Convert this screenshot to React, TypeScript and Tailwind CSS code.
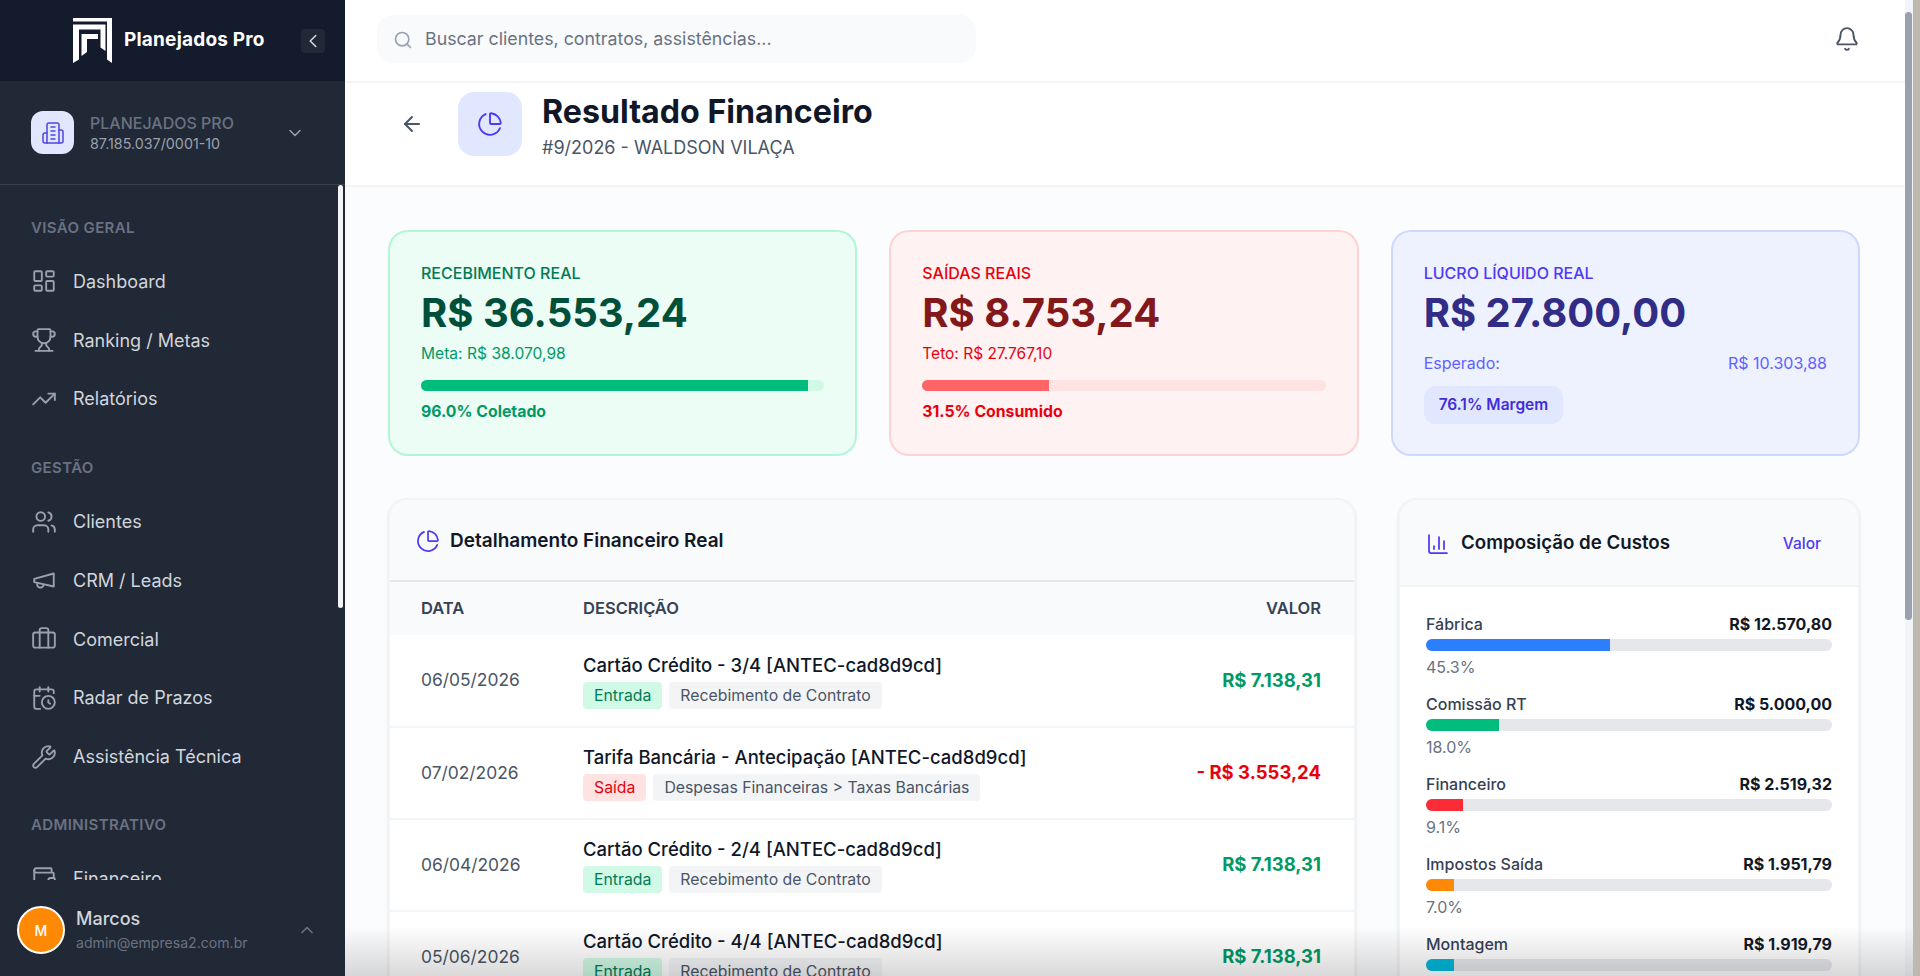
import {
  ArrowLeft, Bell, Briefcase, CalendarClock, ChartColumn, ChevronDown, ChevronLeft, ChevronUp,
  LayoutDashboard, PieChart, Search, TrendingUp, Trophy, Users, Wallet, Wrench,
} from "lucide-react";
import type { ComponentType, ReactNode } from "react";

type IconProps = { className?: string; strokeWidth?: number };
type Item = { label: string; icon: ComponentType<IconProps> };

function MegaphoneIcon({ className, strokeWidth }: IconProps) {
  return (
    <svg className={className} viewBox="0 0 24 24" fill="none" stroke="currentColor" strokeWidth={strokeWidth} strokeLinecap="round" strokeLinejoin="round">
      <path d="m3 11 18-5v12L3 14v-3z" />
      <path d="M11.6 16.8a3 3 0 1 1-5.8-1.6" />
    </svg>
  );
}

const sections: { title: string; cls: string; items: Item[] }[] = [
  {
    title: "VISÃO GERAL",
    cls: "mt-[34px]",
    items: [
      { label: "Dashboard", icon: LayoutDashboard },
      { label: "Ranking / Metas", icon: Trophy },
      { label: "Relatórios", icon: TrendingUp },
    ],
  },
  {
    title: "GESTÃO",
    cls: "mt-[31px]",
    items: [
      { label: "Clientes", icon: Users },
      { label: "CRM / Leads", icon: MegaphoneIcon },
      { label: "Comercial", icon: Briefcase },
      { label: "Radar de Prazos", icon: CalendarClock },
      { label: "Assistência Técnica", icon: Wrench },
    ],
  },
  {
    title: "ADMINISTRATIVO",
    cls: "mt-[30px]",
    items: [{ label: "Financeiro", icon: Wallet }],
  },
];

const rows = [
  { date: "06/05/2026", title: "Cartão Crédito - 3/4 [ANTEC-cad8d9cd]", kind: "Entrada", cat: "Recebimento de Contrato", value: "R$ 7.138,31" },
  { date: "07/02/2026", title: "Tarifa Bancária - Antecipação [ANTEC-cad8d9cd]", kind: "Saída", cat: "Despesas Financeiras > Taxas Bancárias", value: "- R$ 3.553,24" },
  { date: "06/04/2026", title: "Cartão Crédito - 2/4 [ANTEC-cad8d9cd]", kind: "Entrada", cat: "Recebimento de Contrato", value: "R$ 7.138,31" },
  { date: "05/06/2026", title: "Cartão Crédito - 4/4 [ANTEC-cad8d9cd]", kind: "Entrada", cat: "Recebimento de Contrato", value: "R$ 7.138,31" },
];

const costs = [
  { name: "Fábrica", value: "R$ 12.570,80", pct: 45.3, bar: "bg-blue-500" },
  { name: "Comissão RT", value: "R$ 5.000,00", pct: 18.0, bar: "bg-emerald-500" },
  { name: "Financeiro", value: "R$ 2.519,32", pct: 9.1, bar: "bg-red-500" },
  { name: "Impostos Saída", value: "R$ 1.951,79", pct: 7.0, bar: "bg-orange-400" },
  { name: "Montagem", value: "R$ 1.919,79", pct: 7.0, bar: "bg-cyan-500" },
];

function Logo() {
  return (
    <svg width="39" height="45" viewBox="0 0 39 45" fill="#fff" className="shrink-0">
      <path d="M0 0H39V45L34 41.5V3.5H0Z" />
      <path d="M0 6.5H32.5V33L27.5 29.5V11.5H6V41.5L0 45Z" />
      <path d="M8.5 16H25V21H14V34L8.5 38Z" />
    </svg>
  );
}

function BuildingIcon() {
  return (
    <svg width="24" height="24" viewBox="0 0 24 24" fill="none" stroke="#4f46e5" strokeWidth="1.5" strokeLinecap="round" strokeLinejoin="round">
      <path d="M6 22V4a2 2 0 0 1 2-2h8a2 2 0 0 1 2 2v18Z" />
      <path d="M6 12H4a2 2 0 0 0-2 2v6a2 2 0 0 0 2 2h2" />
      <path d="M18 9h2a2 2 0 0 1 2 2v9a2 2 0 0 1-2 2h-2" />
      <path d="M10 6h4" />
      <path d="M10 10h4" />
      <path d="M10 14h4" />
      <path d="M10 18h4" />
    </svg>
  );
}

function Sidebar() {
  return (
    <aside className="relative flex h-full w-[345px] shrink-0 flex-col bg-[#212936]">
      <div className="flex h-[81px] shrink-0 items-center bg-[#131b2c] pl-[73px] pr-[20px]">
        <Logo />
        <span className="ml-[12px] text-[19px] font-bold tracking-[0.2px] text-white">Planejados Pro</span>
        <span className="ml-auto flex h-[24px] w-[24px] items-center justify-center rounded-sm bg-[#212936] text-gray-300">
          <ChevronLeft className="h-[22px] w-[22px]" strokeWidth={1.75} />
        </span>
      </div>
      <div className="flex h-[104px] shrink-0 items-center border-b border-[#374151] pl-[31px] pr-[40px]">
        <span className="flex h-[43px] w-[43px] items-center justify-center rounded-xl bg-indigo-100">
          <BuildingIcon />
        </span>
        <div className="ml-[16px] min-w-0">
          <div className="text-[16px] leading-[22px] font-medium text-gray-500">PLANEJADOS PRO</div>
          <div className="text-[14.3px] leading-[20px] text-gray-400">87.185.037/0001-10</div>
        </div>
        <ChevronDown className="ml-auto h-[20px] w-[20px] text-gray-400" strokeWidth={1.75} />
      </div>
      <nav className="relative min-h-0 flex-1 overflow-hidden">
        {sections.map((s) => (
          <div key={s.title} className={s.cls}>
            <div className="mb-[15px] pl-[31px] text-[15px] leading-[18px] font-semibold tracking-wide text-gray-500">{s.title}</div>
            {s.items.map((it) => {
              const Icon = it.icon;
              return (
                <div key={it.label} className="flex h-[58.75px] items-center pl-[31px] text-gray-300">
                  <Icon className="h-[26px] w-[26px] shrink-0 text-gray-400" strokeWidth={1.75} />
                  <span className="ml-[16px] text-[18px]">{it.label}</span>
                </div>
              );
            })}
          </div>
        ))}
        <div className="absolute right-[2px] top-0 h-[423px] w-[5px] rounded-full bg-gray-100" />
      </nav>
      <div className="flex h-[96px] shrink-0 items-center pl-[17px] pr-[28px] pt-[4px]">
        <span className="flex h-[48px] w-[48px] items-center justify-center rounded-full border-2 border-white bg-orange-400 text-[14px] font-medium text-white">M</span>
        <div className="ml-[11px]">
          <div className="text-[18px] leading-[26px] font-medium text-gray-300">Marcos</div>
          <div className="text-[14.1px] leading-[22px] text-gray-500">admin@empresa2.com.br</div>
        </div>
        <ChevronUp className="ml-auto h-[20px] w-[20px] text-gray-500" />
      </div>
    </aside>
  );
}

function Card({ border, bg, children }: { border: string; bg: string; children: ReactNode }) {
  return (
    <div className={`h-[226px] rounded-[20px] border-2 p-[31px] ${border} ${bg}`}>{children}</div>
  );
}

function Bar({ track, fill, pct }: { track: string; fill: string; pct: number }) {
  return (
    <div className={`mt-[15px] h-[11px] overflow-hidden rounded-full ${track}`}>
      <div className={`h-full ${fill}`} style={{ width: `${pct}%` }} />
    </div>
  );
}

function Kpis() {
  const label = "text-[16px] leading-[20px] font-medium";
  const value = "mt-[6px] text-[40px] leading-[48px] font-bold";
  return (
    <div className="grid grid-cols-3 gap-[32px]">
      <Card border="border-emerald-200/80" bg="bg-emerald-50">
        <div className={`${label} text-emerald-700`}>RECEBIMENTO REAL</div>
        <div className={`${value} text-emerald-900`}>R$ 36.553,24</div>
        <div className="mt-[6px] text-[15.6px] leading-[22px] text-emerald-600">Meta: R$ 38.070,98</div>
        <Bar track="bg-emerald-100" fill="bg-emerald-500" pct={96} />
        <div className="mt-[11px] text-[15.8px] leading-[20px] font-bold text-emerald-600">96.0% Coletado</div>
      </Card>
      <Card border="border-red-200/80" bg="bg-red-50">
        <div className={`${label} text-red-600`}>SAÍDAS REAIS</div>
        <div className={`${value} text-red-900`}>R$ 8.753,24</div>
        <div className="mt-[6px] text-[15.5px] leading-[22px] text-red-600">Teto: R$ 27.767,10</div>
        <Bar track="bg-red-100" fill="bg-red-400" pct={31.5} />
        <div className="mt-[11px] text-[15.8px] leading-[20px] font-bold text-red-600">31.5% Consumido</div>
      </Card>
      <Card border="border-indigo-200/80" bg="bg-indigo-50">
        <div className={`${label} text-indigo-600`}>LUCRO LÍQUIDO REAL</div>
        <div className={`${value} text-indigo-900`}>R$ 27.800,00</div>
        <div className="mt-[15px] flex justify-between text-[16px] leading-[22px] text-indigo-500">
          <span>Esperado:</span>
          <span>R$ 10.303,88</span>
        </div>
        <div className="mt-[12px] inline-block rounded-[12px] bg-indigo-100 px-[15px] py-[8px] text-[15.5px] leading-[22px] font-semibold text-indigo-700">76.1% Margem</div>
      </Card>
    </div>
  );
}

function DetailTable() {
  return (
    <div className="w-[968px] shrink-0 overflow-hidden rounded-t-[20px] border-2 border-gray-100 bg-white shadow-sm">
      <div className="flex h-[82px] items-center gap-[10px] border-b-2 border-gray-200 bg-gray-50 pl-[26px] pt-[2px]">
        <PieChart className="h-[24px] w-[24px] text-indigo-600" strokeWidth={1.75} />
        <span className="text-[19px] font-semibold text-gray-900">Detalhamento Financeiro Real</span>
      </div>
      <table className="w-full border-collapse">
        <thead>
          <tr className="h-[53px] bg-gray-50 text-[16.5px] text-gray-700">
            <th className="w-[193px] pl-[31px] text-left font-semibold">DATA</th>
            <th className="text-left font-semibold">DESCRIÇÃO</th>
            <th className="pr-[33px] text-right font-semibold">VALOR</th>
          </tr>
        </thead>
        <tbody>
          {rows.map((r) => {
            const out = r.kind === "Saída";
            return (
              <tr key={r.title} className="h-[92px] border-b-2 border-gray-100">
                <td className="pl-[31px] text-[17.4px] text-gray-600">{r.date}</td>
                <td>
                  <div className="text-[18.5px] leading-[24px] font-medium text-gray-900">{r.title}</div>
                  <div className="mt-[5px] flex gap-[7px] text-[15.8px] leading-[27px]">
                    <span className={`rounded-[4px] px-[11px] ${out ? "bg-red-100 text-red-600" : "bg-emerald-100 text-emerald-700"}`}>{r.kind}</span>
                    <span className="rounded-[4px] bg-gray-100 px-[11px] text-gray-600">{r.cat}</span>
                  </div>
                </td>
                <td className={`pr-[33px] text-right text-[18.5px] font-bold ${out ? "text-red-600" : "text-emerald-600"}`}>{r.value}</td>
              </tr>
            );
          })}
        </tbody>
      </table>
    </div>
  );
}

function CostCard() {
  return (
    <div className="min-w-0 flex-1 overflow-hidden rounded-t-[20px] border-2 border-gray-100 bg-white shadow-sm">
      <div className="flex h-[87px] items-center border-b-2 border-gray-100 bg-gray-50 pl-[26px] pr-[37px] pt-[2px]">
        <ChartColumn className="h-[24px] w-[24px] text-indigo-600" strokeWidth={1.75} />
        <span className="ml-[11px] text-[18.7px] font-semibold text-gray-900">Composição de Custos</span>
        <span className="ml-auto text-[15.5px] font-medium text-indigo-600">Valor</span>
      </div>
      <div className="flex flex-col gap-[8px] px-[26px] pt-[25px]">
        {costs.map((c) => (
          <div key={c.name}>
            <div className="flex h-[24px] items-center justify-between text-[16px]">
              <span className="font-medium text-gray-700">{c.name}</span>
              <span className="font-bold text-gray-900">{c.value}</span>
            </div>
            <div className="mt-[3px] h-[12px] overflow-hidden rounded-full bg-gray-200">
              <div className={`h-full ${c.bar}`} style={{ width: `${c.pct}%` }} />
            </div>
            <div className="h-[33px] text-[16px] leading-[32px] text-gray-500">{c.pct.toFixed(1)}%</div>
          </div>
        ))}
      </div>
    </div>
  );
}

export default function App() {
  return (
    <div className="relative flex h-[976px] w-[1920px] overflow-hidden bg-[#bdb9ae] font-['Inter',sans-serif]">
      <Sidebar />
      <main className="flex h-full w-[1560px] shrink-0 flex-col overflow-hidden bg-[#fbfcfd]">
        <header className="flex h-[83px] shrink-0 items-center justify-between border-b-2 border-gray-100 bg-white pb-[3px] pl-[32px] pr-[45px]">
          <div className="flex h-[48px] w-[599px] items-center gap-[12px] rounded-[16px] bg-gray-50 pl-[16px] pt-[1px] text-[17.8px] text-gray-500">
            <Search className="h-[20px] w-[20px] text-gray-400" />
            <span>Buscar clientes, contratos, assistências...</span>
          </div>
          <Bell className="h-[26px] w-[26px] text-gray-600" strokeWidth={1.75} />
        </header>
        <div className="flex h-[104px] shrink-0 items-center border-b-2 border-gray-100 bg-white pb-[20px] pl-[55px]">
          <ArrowLeft className="h-[24px] w-[24px] text-gray-600" />
          <span className="ml-[34px] flex h-[64px] w-[64px] items-center justify-center rounded-2xl bg-indigo-100">
            <PieChart className="h-[26px] w-[26px] text-indigo-600" strokeWidth={1.75} />
          </span>
          <div className="ml-[20px] mt-[5px]">
            <div className="text-[32.2px] leading-[40px] font-bold text-gray-900">Resultado Financeiro</div>
            <div className="mt-[2px] text-[18px] leading-[28px] text-gray-600">#9/2026 - WALDSON VILAÇA</div>
          </div>
        </div>
        <div className="min-h-0 flex-1 overflow-hidden pl-[43px] pr-[45px] pt-[43px]">
          <Kpis />
          <div className="mt-[42px] flex gap-[42px]">
            <DetailTable />
            <CostCard />
          </div>
        </div>
      </main>
      <div className="relative h-full w-[8px] shrink-0 bg-slate-100">
        <div className="absolute left-0 right-[1px] top-[12px] h-[608px] rounded-full bg-gray-400" />
      </div>
      <div className="pointer-events-none absolute bottom-0 left-[345px] right-[7px] h-[50px] bg-gradient-to-b from-transparent to-black/15" />
    </div>
  );
}
